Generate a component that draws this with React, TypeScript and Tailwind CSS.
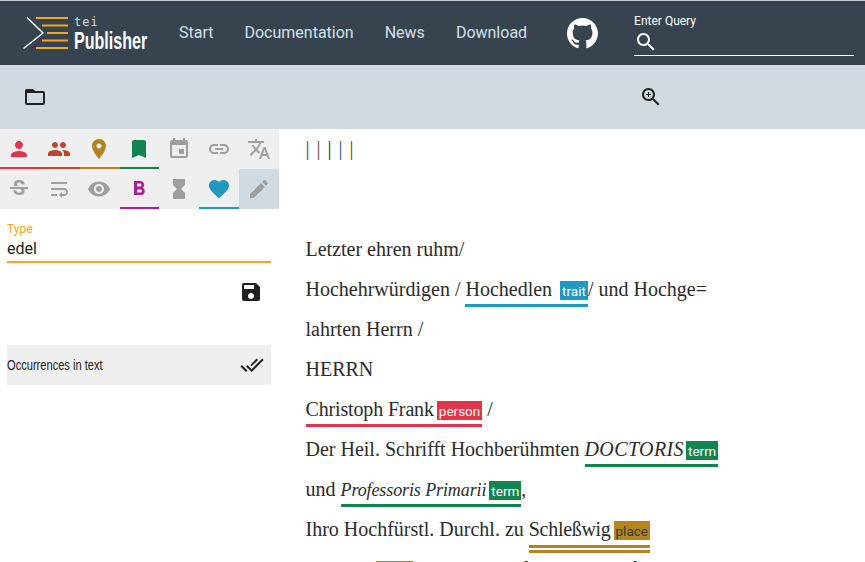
import type { ReactNode } from "react";

const icons = {
  person: "M12 12c2.21 0 4-1.79 4-4s-1.79-4-4-4-4 1.79-4 4 1.79 4 4 4zm0 2c-2.67 0-8 1.34-8 4v2h16v-2c0-2.66-5.33-4-8-4z",
  people: "M16 11c1.66 0 2.99-1.34 2.99-3S17.66 5 16 5c-1.66 0-3 1.34-3 3s1.34 3 3 3zm-8 0c1.66 0 2.99-1.34 2.99-3S9.66 5 8 5C6.34 5 5 6.34 5 8s1.34 3 3 3zm0 2c-2.33 0-7 1.17-7 3.5V19h14v-2.5c0-2.33-4.67-3.5-7-3.5zm8 0c-.29 0-.62.02-.97.05 1.16.84 1.97 1.97 1.97 3.45V19h6v-2.5c0-2.33-4.67-3.5-7-3.5z",
  place: "M12 2C8.13 2 5 5.13 5 9c0 5.25 7 13 7 13s7-7.75 7-13c0-3.87-3.13-7-7-7zm0 9.5c-1.38 0-2.5-1.12-2.5-2.5s1.12-2.5 2.5-2.5 2.5 1.12 2.5 2.5-1.12 2.5-2.5 2.5z",
  bookmark: "M17 3H7c-1.1 0-1.99.9-1.99 2L5 21l7-3 7 3V5c0-1.1-.9-2-2-2z",
  event: "M17 12h-5v5h5v-5zM16 1v2H8V1H6v2H5c-1.11 0-1.99.9-1.99 2L3 19c0 1.1.89 2 2 2h14c1.1 0 2-.9 2-2V5c0-1.1-.9-2-2-2h-1V1h-2zm3 18H5V8h14v11z",
  link: "M3.9 12c0-1.71 1.39-3.1 3.1-3.1h4V7H7c-2.76 0-5 2.24-5 5s2.24 5 5 5h4v-1.9H7c-1.71 0-3.1-1.39-3.1-3.1zM8 13h8v-2H8v2zm9-6h-4v1.9h4c1.71 0 3.1 1.39 3.1 3.1s-1.39 3.1-3.1 3.1h-4V17h4c2.76 0 5-2.24 5-5s-2.24-5-5-5z",
  translate: "M12.87 15.07l-2.54-2.51.03-.03c1.74-1.94 2.98-4.17 3.71-6.53H17V4h-7V2H8v2H1v1.99h11.17C11.5 7.92 10.44 9.75 9 11.35 8.07 10.32 7.3 9.19 6.69 8h-2c.73 1.63 1.73 3.17 2.98 4.56l-5.09 5.02L4 19l5-5 3.11 3.11.76-2.04zM18.5 10h-2L12 22h2l1.12-3h4.75L21 22h2l-4.5-12zm-2.62 7l1.62-4.33L19.12 17h-3.24z",
  strike: "M6.85 7.08C6.85 4.37 9.45 3 12.24 3c1.64 0 3 .49 3.9 1.28.77.65 1.46 1.73 1.46 3.24h-3.01c0-.31-.05-.59-.15-.85-.29-.86-1.2-1.28-2.25-1.28-1.86 0-2.34 1.02-2.34 1.7 0 .48.25.88.74 1.21.38.25.77.48 1.41.7H7.39c-.21-.34-.54-.89-.54-1.92zM21 12v-2H3v2h9.62c1.15.45 1.96.75 1.96 1.97 0 1-.81 1.67-2.28 1.67-1.54 0-2.93-.54-2.93-2.51H6.4c0 .55.08 1.13.24 1.58.81 2.29 3.29 3.3 5.67 3.3 2.27 0 5.3-.89 5.3-4.05 0-.3-.01-1.16-.48-1.94H21V12z",
  wrap: "M4 19h6v-2H4v2zM20 5H4v2h16V5zm-3 6H4v2h13.25c1.1 0 2 .9 2 2s-.9 2-2 2H15v-2l-3 3 3 3v-2h2c2.21 0 4-1.79 4-4s-1.79-4-4-4z",
  eye: "M12 4.5C7 4.5 2.73 7.61 1 12c1.73 4.39 6 7.5 11 7.5s9.27-3.11 11-7.5c-1.73-4.39-6-7.5-11-7.5zM12 17c-2.76 0-5-2.24-5-5s2.24-5 5-5 5 2.24 5 5-2.24 5-5 5zm0-8c-1.66 0-3 1.34-3 3s1.34 3 3 3 3-1.34 3-3-1.34-3-3-3z",
  bold: "M15.6 10.79c.97-.67 1.65-1.77 1.65-2.79 0-2.26-1.75-4-4-4H7v14h7.04c2.09 0 3.71-1.7 3.71-3.79 0-1.52-.86-2.82-2.15-3.42zM10 6.5h3c.83 0 1.5.67 1.5 1.5s-.67 1.5-1.5 1.5h-3v-3zm3.5 9H10v-3h3.5c.83 0 1.5.67 1.5 1.5s-.67 1.5-1.5 1.5z",
  hourglass: "M6 2v6h.01L6 8.01 10 12l-4 4 .01.01H6V22h12v-5.99h-.01L18 16l-4-4 4-3.99-.01-.01H18V2H6z",
  heart: "M12 21.35l-1.45-1.32C5.4 15.36 2 12.28 2 8.5 2 5.42 4.42 3 7.5 3c1.74 0 3.41.81 4.5 2.09C13.09 3.81 14.76 3 16.5 3 19.58 3 22 5.42 22 8.5c0 3.78-3.4 6.86-8.55 11.54L12 21.35z",
  edit: "M3 17.25V21h3.75L17.81 9.94l-3.75-3.75L3 17.25zM20.71 7.04c.39-.39.39-1.02 0-1.41l-2.34-2.34c-.39-.39-1.02-.39-1.41 0l-1.83 1.83 3.75 3.75 1.83-1.83z",
  save: "M17 3H5c-1.11 0-2 .9-2 2v14c0 1.1.89 2 2 2h14c1.1 0 2-.9 2-2V7l-4-4zm-5 16c-1.66 0-3-1.34-3-3s1.34-3 3-3 3 1.34 3 3-1.34 3-3 3zm3-10H5V5h10v4z",
  doneAll: "M18 7l-1.41-1.41-6.34 6.34 1.41 1.41L18 7zm4.24-1.41L11.66 16.17 7.48 12l-1.41 1.41L11.66 19l12-12-1.42-1.41zM.41 13.41L6 19l1.41-1.41L1.83 12 .41 13.41z",
  folder: "M20 6h-8l-2-2H4c-1.1 0-1.99.9-1.99 2L2 18c0 1.1.9 2 2 2h16c1.1 0 2-.9 2-2V8c0-1.1-.9-2-2-2zm0 12H4V8h16v10z",
  search: "M15.5 14h-.79l-.28-.27C15.41 12.59 16 11.11 16 9.5 16 5.91 13.09 3 9.5 3S3 5.91 3 9.5 5.91 16 9.5 16c1.61 0 3.09-.59 4.23-1.57l.27.28v.79l5 4.99L20.49 19l-4.99-5zm-6 0C7.01 14 5 11.99 5 9.5S7.01 5 9.5 5 14 7.01 14 9.5 11.99 14 9.5 14z",
  zoomIn: "M15.5 14h-.79l-.28-.27C15.41 12.59 16 11.11 16 9.5 16 5.91 13.09 3 9.5 3S3 5.91 3 9.5 5.91 16 9.5 16c1.61 0 3.09-.59 4.23-1.57l.27.28v.79l5 4.99L20.49 19l-4.99-5zm-6 0C7.01 14 5 11.99 5 9.5S7.01 5 9.5 5 14 7.01 14 9.5 11.99 14 9.5 14zM12 10h-2v2H9v-2H7V9h2V7h1v2h2v1z",
};

const Icon = ({ d, className }: { d: string; className: string }) => (
  <svg viewBox="0 0 24 24" className={className} fill="currentColor">
    <path d={d} />
  </svg>
);

const toolbar = [
  { d: icons.person, color: "text-[#e2344a]", bar: "border-[#e2344a]" },
  { d: icons.people, color: "text-[#c0452a]", bar: "border-[#c0452a]" },
  { d: icons.place, color: "text-[#b38420]", bar: "border-[#b38420]" },
  { d: icons.bookmark, color: "text-[#15834f]", bar: "border-[#15834f]" },
  { d: icons.event, color: "text-[#9e9e9e]", bar: "border-transparent" },
  { d: icons.link, color: "text-[#9e9e9e]", bar: "border-transparent" },
  { d: icons.translate, color: "text-[#9e9e9e]", bar: "border-transparent" },
  { d: icons.strike, color: "text-[#9e9e9e]", bar: "border-transparent" },
  { d: icons.wrap, color: "text-[#9e9e9e]", bar: "border-transparent" },
  { d: icons.eye, color: "text-[#9e9e9e]", bar: "border-transparent" },
  { d: icons.bold, color: "text-[#a91e96]", bar: "border-[#a91e96]" },
  { d: icons.hourglass, color: "text-[#9e9e9e]", bar: "border-transparent" },
  { d: icons.heart, color: "text-[#2098c0]", bar: "border-[#2098c0]" },
  { d: icons.edit, color: "text-[#9e9e9e] bg-[#d1d9e1]", bar: "border-transparent" },
];

const Badge = ({ className, children }: { className: string; children: ReactNode }) => (
  <span className={`inline-block h-[19px] px-[2px] align-[0px] font-['Roboto',sans-serif] text-[13.5px] leading-[21px] ${className}`}>
    {children}
  </span>
);

const Line = ({ children }: { children: ReactNode }) => <div className="h-10 whitespace-nowrap leading-10">{children}</div>;

const Logo = () => (
  <div className="mt-[2px] flex items-start">
    <svg viewBox="0 0 50 36" className="h-9 w-[50px]">
      <path d="M4 1.5 L20 17 L0.5 32.5" fill="none" stroke="#ffffff" strokeWidth="1.4" />
      <path d="M13 2H45M19 9.5H45M24 17H45M19 24.5H45M13 32H45" stroke="#f5a623" strokeWidth="2" />
    </svg>
    <div className="ml-px flex w-[73px] flex-col text-white">
      <span className="font-['DejaVu_Sans_Mono',monospace] text-[12px] leading-[13px] tracking-[1px] text-[#d5dbe0]">tei</span>
      <span className="inline-block origin-left scale-x-[0.67] whitespace-nowrap font-['Liberation_Sans',sans-serif] text-[24px] font-bold leading-[23px]">Publisher</span>
    </div>
  </div>
);

const App = () => {
  return (
    <div className="h-[562px] w-[865px] overflow-hidden bg-white font-['Roboto',sans-serif]">
      {/* Header */}
      <div className="flex h-[65px] items-center border-t border-[#c9c9c9] bg-[#37444f] pl-[23px]">
        <Logo />
        <nav className="ml-[32px] flex gap-[31px] text-base text-[#d3e0ec]">
          <span>Start</span>
          <span>Documentation</span>
          <span>News</span>
          <span>Download</span>
        </nav>
        <svg viewBox="0 0 16 16" className="ml-[40px] h-[31px] w-[31px]" fill="#ffffff">
          <path d="M8 0C3.58 0 0 3.58 0 8c0 3.54 2.29 6.53 5.47 7.59.4.07.55-.17.55-.38 0-.19-.01-.82-.01-1.49-2.01.37-2.53-.49-2.69-.94-.09-.23-.48-.94-.82-1.13-.28-.15-.68-.52-.01-.53.63-.01 1.08.58 1.23.82.72 1.21 1.87.87 2.33.66.07-.52.28-.87.51-1.07-1.78-.2-3.64-.89-3.64-3.95 0-.87.31-1.59.82-2.15-.08-.2-.36-1.02.08-2.12 0 0 .67-.21 2.2.82.64-.18 1.32-.27 2-.27.68 0 1.36.09 2 .27 1.53-1.04 2.2-.82 2.2-.82.44 1.1.16 1.92.08 2.12.51.56.82 1.27.82 2.15 0 3.07-1.87 3.75-3.65 3.95.29.25.54.73.54 1.48 0 1.07-.01 1.93-.01 2.2 0 .21.15.46.55.38A8.013 8.013 0 0016 8c0-4.42-3.58-8-8-8z" />
        </svg>
        <div className="ml-[36px] mt-1 w-[220px] text-white">
          <div className="text-xs leading-[14px]">Enter Query</div>
          <div className="h-7 border-b border-white pt-[2px]">
            <Icon d={icons.search} className="h-6 w-6" />
          </div>
        </div>
      </div>

      {/* Sub toolbar */}
      <div className="flex h-16 items-center bg-[#d1d9e1] pl-[23px] text-[#212121]">
        <Icon d={icons.folder} className="h-6 w-6" />
        <Icon d={icons.zoomIn} className="ml-[592px] h-6 w-6" />
      </div>

      <div className="flex">
        {/* Sidebar */}
        <div className="w-[279px]">
          <div className="grid grid-cols-7 bg-[#efefef]">
            {toolbar.map((t, i) => (
              <div key={i} className={`flex h-10 items-center justify-center border-b-2 pr-px pt-px ${t.bar} ${t.color}`}>
                <Icon d={t.d} className="h-6 w-6" />
              </div>
            ))}
          </div>
          <div className="mx-[7px] w-[264px]">
            <div className="mt-[13px] text-xs leading-[14px] text-[#f5a623]">Type</div>
            <div className="h-[27px] border-b-2 border-[#f5a623] text-base leading-[26px] text-[#212121]">edel</div>
            <div className="flex justify-end pt-[17px] text-[#212121]">
              <Icon d={icons.save} className="mr-[8px] h-6 w-6" />
            </div>
            <div className="mt-[41px] flex h-10 items-center justify-between bg-[#efefef] pr-[7px] text-[#212121]">
              <span className="mt-px inline-block origin-left scale-x-[0.74] whitespace-nowrap font-['Liberation_Sans',sans-serif] text-[15px]">Occurrences in text</span>
              <Icon d={icons.doneAll} className="h-6 w-6" />
            </div>
          </div>
        </div>

        {/* Transcription */}
        <div className="pl-[26.5px] font-['Liberation_Serif',serif] text-[20px] text-[#2b2b2b]">
          <div className="mb-[60px] h-10 leading-[38px] [word-spacing:2px]">
            <span className="text-[#1a4f85]">|</span> <span className="text-[#6d3a15]">|</span> <span className="text-[#2b2b2b]">|</span> <span className="text-[#1a4f85]">|</span> <span className="text-[#6d3a15]">|</span>
          </div>
          <Line>Letzter ehren ruhm/</Line>
          <Line>
            Hochehrwürdigen / <span className="border-b-[3px] border-[#2098c0] pb-[4px]">Hochedlen <Badge className="ml-[3px] bg-[#2098c0] text-white">trait</Badge></span>/ und Hochge=
          </Line>
          <Line>lahrten Herrn /</Line>
          <Line>HERRN</Line>
          <Line>
            <span className="border-b-[3px] border-[#e2344a] pb-[4px] tracking-[-0.15px]">Christoph Frank<Badge className="ml-[3px] bg-[#e2344a] tracking-normal text-white">person</Badge></span> /
          </Line>
          <Line>
            Der Heil. Schrifft Hochberühmten <span className="border-b-[3px] border-[#15834f] pb-[4px]"><i className="tracking-[0.4px]">DOCTORIS</i><Badge className="ml-[2px] bg-[#15834f] text-white">term</Badge></span>
          </Line>
          <Line>
            und <span className="border-b-[3px] border-[#15834f] pb-[4px]"><i className="text-[18px] tracking-[-0.1px]">Professoris Primarii</i><Badge className="ml-[3px] bg-[#15834f] text-white">term</Badge></span>,
          </Line>
          <Line>
            Ihro Hochfürstl. Durchl. zu <span className="border-b-[8px] border-double border-[#b38420] pb-[5px]"><span className="tracking-[-0.3px]">Schleßwig</span><Badge className="ml-[3px] bg-[#b38420] text-[#3a3a3a]">place</Badge></span>
          </Line>
          <Line>
            Holstein<Badge className="ml-[3px] bg-[#b38420] text-[#3a3a3a]">place</Badge> unser HErrn fürsten an Hof
          </Line>
        </div>
      </div>
    </div>
  );
};

export default App;
